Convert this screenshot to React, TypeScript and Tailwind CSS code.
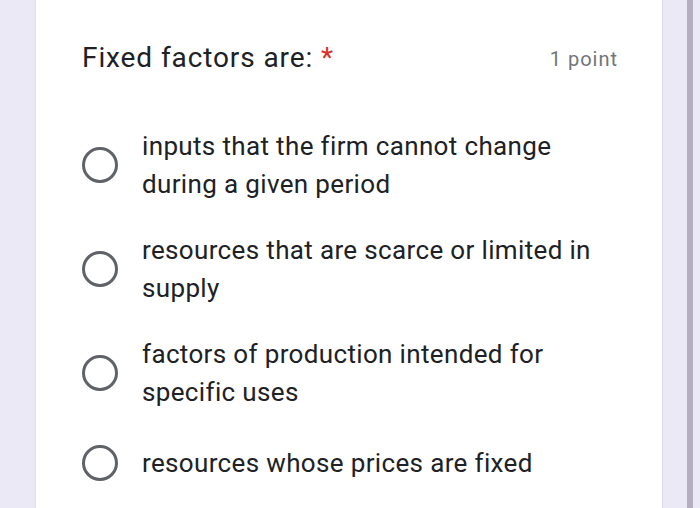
import React from "react";

const options = [
	"inputs that the firm cannot change during a given period",
	"resources that are scarce or limited in supply",
	"factors of production intended for specific uses",
	"resources whose prices are fixed",
];

const Radio = () => (
	<div className="w-[36px] h-[36px] shrink-0 rounded-full border-[3.5px] border-[#5f6368]" />
);

export default function App() {
	return (
		<div
			className="flex w-[700px] h-[508px] bg-[#ece9f6] overflow-hidden"
			style={{ fontFamily: "Roboto, 'Noto Sans', sans-serif" }}
		>
			<div className="w-[36px] shrink-0 border-r border-[#e2deed]" />
			<div className="w-[627px] shrink-0 bg-white pl-[46px] pr-[46px] pt-[37px] border-r border-[#dedbe6]">
				<div className="flex items-start justify-between">
					<h1 className="text-[28px] leading-[42px] tracking-[0.9px] text-[#202124]">
						Fixed factors are: <span className="text-[#d93025]">*</span>
					</h1>
					<span className="text-[20px] leading-[44px] tracking-[1px] text-[#70757a] mr-[-2px]">1 point</span>
				</div>
				<ul className="mt-[46px] flex flex-col">
					{options.map((opt, i) => (
						<li
							key={i}
							className={`flex items-center gap-[24px] ${i === 0 ? "" : i === 3 ? "mt-[33px]" : "mt-[28px]"}`}
						>
							<Radio />
							<span className="text-[26px] leading-[38px] tracking-[0.35px] text-[#202124] max-w-[470px]">
								{opt}
							</span>
						</li>
					))}
				</ul>
			</div>
			<div className="flex-1 flex pl-[24px]">
				<div className="w-[6px] h-full bg-[#b4afbf]" />
			</div>
		</div>
	);
}
